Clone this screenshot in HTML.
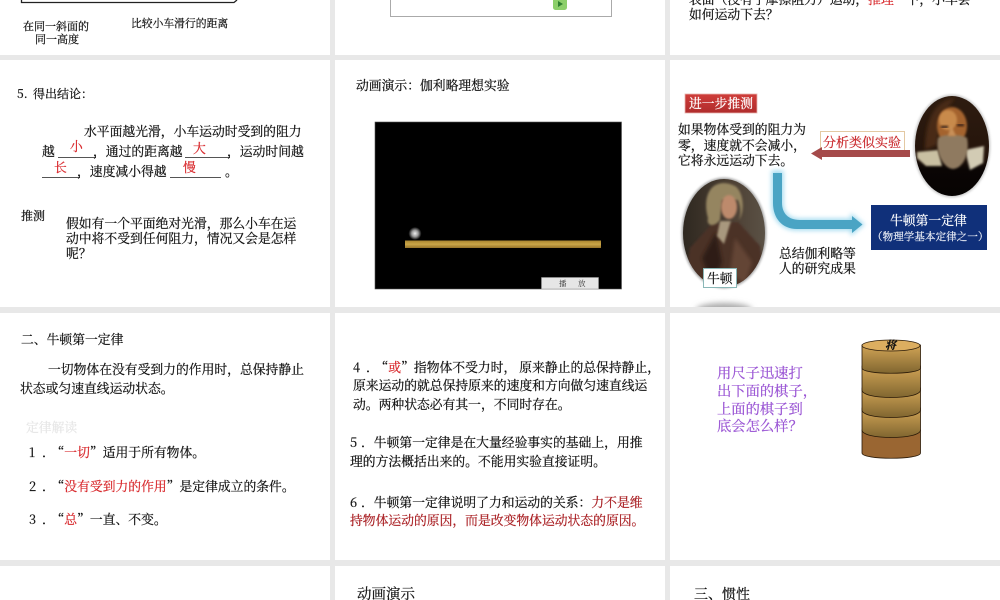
<!DOCTYPE html>
<html lang="zh-CN"><head><meta charset="utf-8">
<style>
html,body{margin:0;padding:0;width:1000px;height:600px;overflow:hidden;background:#e8e8e8}
#r{position:relative;width:1000px;height:600px;overflow:hidden;filter:blur(.35px)}
.p{position:absolute;background:#fff}
.t{position:absolute;white-space:nowrap;line-height:1;font-family:"Noto Serif CJK SC","Liberation Serif",serif;font-size:12.8px;color:#111;-webkit-text-stroke:.22px currentColor}
.r{color:#d8282c}
.n{display:inline-block;width:13px}
.m{display:inline-block;width:9.500px}
.u{position:absolute;height:1px;background:#555}
svg{position:absolute;left:0;top:0}
</style></head><body><div id="r">
<div class="p" style="left:0;top:0;width:330px;height:55px"></div>
<div class="p" style="left:335px;top:0;width:330px;height:55px"></div>
<div class="p" style="left:670px;top:0;width:330px;height:55px"></div>
<div class="p" style="left:0;top:60px;width:330px;height:247px"></div>
<div class="p" style="left:335px;top:60px;width:330px;height:247px"></div>
<div class="p" style="left:670px;top:60px;width:330px;height:247px"></div>
<div class="p" style="left:0;top:313px;width:330px;height:247px"></div>
<div class="p" style="left:335px;top:313px;width:330px;height:247px"></div>
<div class="p" style="left:670px;top:313px;width:330px;height:247px"></div>
<div class="p" style="left:0;top:566px;width:330px;height:34px"></div>
<div class="p" style="left:335px;top:566px;width:330px;height:34px"></div>
<div class="p" style="left:670px;top:566px;width:330px;height:34px"></div>

<svg width="1000" height="600" viewBox="0 0 1000 600">
<defs>
<linearGradient id="lay" x1="0" y1="0" x2="0" y2="1"><stop offset="0" stop-color="#d2a456"/><stop offset="1" stop-color="#806630"/></linearGradient>
<linearGradient id="bar" x1="0" y1="0" x2="0" y2="1"><stop offset="0" stop-color="#a8842f"/><stop offset=".5" stop-color="#c9a548"/><stop offset="1" stop-color="#96742a"/></linearGradient>
<radialGradient id="ball"><stop offset="0" stop-color="#eee"/><stop offset=".5" stop-color="#999"/><stop offset="1" stop-color="#000"/></radialGradient>
<linearGradient id="galbg" x1="0" y1="0" x2="0" y2="1"><stop offset="0" stop-color="#2e1c10"/><stop offset=".6" stop-color="#24140b"/><stop offset=".72" stop-color="#0a0504"/><stop offset="1" stop-color="#060302"/></linearGradient>
<linearGradient id="newtbg" x1="0" y1="0" x2="1" y2="0"><stop offset="0" stop-color="#2e2820"/><stop offset=".6" stop-color="#4d4034"/><stop offset="1" stop-color="#5b5246"/></linearGradient>
<linearGradient id="badge" x1="0" y1="0" x2="0" y2="1"><stop offset="0" stop-color="#cf3d3a"/><stop offset="1" stop-color="#b02c2c"/></linearGradient>
<filter id="gl" x="-30%" y="-30%" width="160%" height="160%"><feGaussianBlur stdDeviation="2.500"/></filter>
<filter id="b1" x="-30%" y="-30%" width="160%" height="160%"><feGaussianBlur stdDeviation="1"/></filter>
<filter id="b2" x="-30%" y="-30%" width="160%" height="160%"><feGaussianBlur stdDeviation="1.800"/></filter>
<filter id="b3" x="-30%" y="-60%" width="160%" height="220%"><feGaussianBlur stdDeviation="3"/></filter>
<clipPath id="cg"><ellipse cx="952" cy="146" rx="37" ry="50"/></clipPath>
<clipPath id="cn"><ellipse cx="724" cy="233" rx="41" ry="54"/></clipPath>
<clipPath id="cs"><rect x="670" y="290" width="100" height="17"/></clipPath>
</defs>

<path d="M21.500 0V2.500H234L237 0" fill="none" stroke="#222" stroke-width="1.300"/>

<path d="M390.500 0V16.500H611.500V0" fill="none" stroke="#aaa" stroke-width="1"/>
<rect x="553" y="-3" width="14" height="13" rx="2.500" fill="#8ccf6a"/>
<path d="M558 1V7L563 4Z" fill="#2f7f2f"/>

<rect x="375" y="122" width="246.500" height="167" fill="#000" stroke="#555" stroke-width=".6"/>
<circle cx="415" cy="233.500" r="6.500" fill="url(#ball)"/>
<rect x="405" y="240.500" width="196" height="7.500" fill="url(#bar)"/>
<rect x="541.500" y="277.500" width="57" height="11.500" fill="#e6e6e6" stroke="#999" stroke-width=".6"/>

<!-- Galileo -->
<ellipse cx="952" cy="146" rx="38.500" ry="51.500" fill="#aaa" opacity=".6" filter="url(#b1)"/>
<g clip-path="url(#cg)">
<rect x="914" y="95" width="76" height="103" fill="url(#galbg)"/>
<path d="M925 150C925 120 935 100 955 98C945 110 938 125 937 145Z" fill="#4a2c16" filter="url(#b2)"/>
<path d="M917 152L938 150L942 166L926 166L917 158Z" fill="#c9c0a2" filter="url(#b1)"/>
<path d="M965 150L984 146L983 163L970 170Z" fill="#d2cbb4" filter="url(#b1)"/>
<ellipse cx="952" cy="126" rx="15" ry="19" fill="#a4642e" filter="url(#b1)"/>
<ellipse cx="948" cy="120" rx="9" ry="10" fill="#c88a4c" filter="url(#b1)"/>
<path d="M938 138C942 134 962 134 967 138C970 152 964 168 953 169C943 168 935 152 938 138Z" fill="#8f7a60" filter="url(#b1)"/>
<path d="M951 125L948 136L956 136Z" fill="#c89058" filter="url(#b1)"/>
<path d="M941 127h7M957 125h7" stroke="#26130a" stroke-width="2" filter="url(#b1)"/>
</g>
<!-- Newton -->
<ellipse cx="724" cy="233" rx="42.500" ry="55.500" fill="#888" opacity=".7" filter="url(#b1)"/>
<g clip-path="url(#cn)">
<rect x="682" y="178" width="84" height="110" fill="url(#newtbg)"/>
<path d="M684 290L690 248L712 224L738 222L760 246L766 290Z" fill="#4b3126" filter="url(#b1)"/>
<path d="M702 258L716 232L722 262L712 285Z" fill="#2f1e17" filter="url(#b2)"/>
<path d="M735 238L752 262L745 285L730 272Z" fill="#644536" filter="url(#b2)"/>
<path d="M718 184C706 188 704 204 708 218C706 226 714 228 720 220L722 200L738 200C741 208 741 214 739 220C745 212 744 192 735 186C729 183 723 182 718 184Z" fill="#958560" filter="url(#b1)"/>
<ellipse cx="729" cy="207" rx="8" ry="12" fill="#bd8a6c" filter="url(#b1)"/>
<path d="M720 221L731 221L724 244L717 236Z" fill="#a8987e" filter="url(#b1)"/>
</g>
<rect x="703.500" y="268.500" width="33" height="19" fill="#fff" stroke="#8ab7b7" stroke-width="1"/>
<g clip-path="url(#cs)"><ellipse cx="724" cy="310" rx="28" ry="7" fill="#aaa" filter="url(#b3)"/></g>

<rect x="820.500" y="131.500" width="84" height="19" fill="#fff" stroke="#e3c9a3" stroke-width="1"/>
<path d="M910 150V157H822V160L811 153.500L822 147V150Z" fill="#a54a4a"/>
<path d="M773 172H782V203C782 213 788 220 800 220H852V216L862.500 224.500L852 233V229H797C782 229 773 218 773 203Z" fill="#a6dcf0" stroke="#a6dcf0" stroke-width="3" filter="url(#gl)"/>
<path d="M773 173H782V203C782 213 788 220 800 220H852V216L862.500 224.500L852 233V229H797C782 229 773 218 773 203Z" fill="#4aa4c4"/>
<rect x="871" y="205" width="116" height="45" fill="#10307a"/>

<rect x="685" y="94" width="72" height="19" fill="url(#badge)" stroke="#e8b5b0" stroke-width=".8"/>

<path d="M862 430V453C862 460 920.500 460 920.500 453V430Z" fill="#9a6632" stroke="#2a1a08" stroke-width=".8"/>
<path d="M862 408V430C862 440 920.500 440 920.500 430V408Z" fill="url(#lay)" stroke="#2a1a08" stroke-width=".8"/>
<path d="M862 388V410C862 420 920.500 420 920.500 410V388Z" fill="url(#lay)" stroke="#2a1a08" stroke-width=".8"/>
<path d="M862 366V390C862 400 920.500 400 920.500 390V366Z" fill="url(#lay)" stroke="#2a1a08" stroke-width=".8"/>
<path d="M862 345V368C862 375 920.500 375 920.500 368V345Z" fill="url(#lay)" stroke="#2a1a08" stroke-width=".8"/>
<ellipse cx="891" cy="345.500" rx="29" ry="5.500" fill="#dcae60" stroke="#2a1a08" stroke-width=".8"/>
</svg>

<div class="u" style="left:58px;top:157px;width:38px"></div>
<div class="u" style="left:185px;top:157px;width:45px"></div>
<div class="u" style="left:42px;top:177px;width:38px"></div>
<div class="u" style="left:170px;top:177px;width:51px"></div>

<!-- col 1 -->
<div class="t" style="left:23px;top:21px;font-size:11px">在同一斜面的</div>
<div class="t" style="left:35px;top:34px;font-size:11px">同一高度</div>
<div class="t" style="left:131px;top:19px;font-size:10.800px">比较小车滑行的距离</div>
<div class="t" style="left:17px;top:88px;font-size:12px"><span style="display:inline-block;width:16px">5.</span>得出结论：</div>
<div class="t" style="left:84px;top:125px">水平面越光滑，小车运动时受到的阻力</div>
<div class="t" style="left:42px;top:145px">越</div>
<div class="t" style="left:93px;top:145px">，通过的距离越</div>
<div class="t" style="left:227px;top:145px">，运动时间越</div>
<div class="t" style="left:77px;top:165px">，速度减小得越</div>
<div class="t" style="left:225px;top:165px">。</div>
<div class="t r" style="left:70px;top:140px">小</div>
<div class="t r" style="left:193px;top:142px">大</div>
<div class="t r" style="left:54px;top:161px">长</div>
<div class="t r" style="left:183px;top:161px">慢</div>
<div class="t" style="left:21px;top:210px;font-size:12px">推测</div>
<div class="t" style="left:66px;top:217px">假如有一个平面绝对光滑，那么小车在运</div>
<div class="t" style="left:66px;top:232px">动中将不受到任何阻力，情况又会是怎样</div>
<div class="t" style="left:66px;top:247px">呢？</div>

<div class="t" style="left:21px;top:333px">二、牛顿第一定律</div>
<div class="t" style="left:48px;top:363px">一切物体在没有受到力的作用时，总保持静止</div>
<div class="t" style="left:20px;top:382px">状态或匀速直线运动状态。</div>
<div class="t" style="left:26px;top:421px;color:#e6e6e6">定律解读</div>
<div class="t" style="left:29px;top:446px"><span class="n">1</span><span class="m">．</span>“<span class="r">一切</span>”适用于所有物体。</div>
<div class="t" style="left:29px;top:480px"><span class="n">2</span><span class="m">．</span>“<span class="r">没有受到力的作用</span>”是定律成立的条件。</div>
<div class="t" style="left:29px;top:513px"><span class="n">3</span><span class="m">．</span>“<span class="r">总</span>”一直、不变。</div>

<!-- col 2 -->
<div class="t" style="left:356px;top:79px">动画演示：伽利略理想实验</div>
<div class="t" style="left:559px;top:279.500px;font-size:7.500px;color:#333;-webkit-text-stroke:0">播</div>
<div class="t" style="left:578px;top:279.500px;font-size:7.500px;color:#333;-webkit-text-stroke:0">放</div>
<div class="t" style="left:353px;top:361px"><span class="n">4</span><span class="m">．</span>“<span class="r">或</span>”指物体不受力时，<span style="margin-left:3px">原来静止的总保持静止，</span></div>
<div class="t" style="left:353px;top:379px">原来运动的就总保持原来的速度和方向做匀速直线运</div>
<div class="t" style="left:353px;top:398px">动。两种状态必有其一，不同时存在。</div>
<div class="t" style="left:350px;top:436px"><span style="display:inline-block;width:11px">5</span>．牛顿第一定律是在大量经验事实的基础上，用推</div>
<div class="t" style="left:350px;top:455px">理的方法概括出来的。不能用实验直接证明。</div>
<div class="t" style="left:350px;top:496px"><span style="display:inline-block;width:11px">6</span>．牛顿第一定律说明了力和运动的关系：<span style="color:#a81c20">力不是维</span></div>
<div class="t" style="left:350px;top:514px;color:#a81c20">持物体运动的原因，而是改变物体运动状态的原因。</div>
<div class="t" style="left:357px;top:587px;font-size:14.500px">动画演示</div>

<!-- col 3 -->
<div class="t" style="left:689px;top:-7px">表面（没有了摩擦阻力）运动，<span class="r">推理</span>一下，小车会</div>
<div class="t" style="left:689px;top:8px">如何运动下去？</div>
<div class="t" style="left:689px;top:97px;color:#fff;font-size:12.800px">进一步推测</div>
<div class="t" style="left:678px;top:123px">如果物体受到的阻力为</div>
<div class="t" style="left:678px;top:139px">零，速度就不会减小，</div>
<div class="t" style="left:678px;top:154px">它将永远运动下去。</div>
<div class="t r" style="left:823px;top:135px;font-size:13px;color:#c9282c">分析类似实验</div>
<div class="t" style="left:707px;top:272px;font-size:12.800px">牛顿</div>
<div class="t" style="left:890px;top:214px;color:#fff;font-size:12.800px">牛顿第一定律</div>
<div class="t" style="left:872px;top:232px;color:#e8ecf5;font-size:10.500px;letter-spacing:.1px">（物理学基本定律之一）</div>
<div class="t" style="left:779px;top:247px">总结伽利略等</div>
<div class="t" style="left:779px;top:262px">人的研究成果</div>
<div class="t" style="left:717px;top:366px;font-size:14.300px;color:#9a55d4">用尺子迅速打</div>
<div class="t" style="left:717px;top:384px;font-size:14.300px;color:#9a55d4">出下面的棋子，</div>
<div class="t" style="left:717px;top:402px;font-size:14.300px;color:#9a55d4">上面的棋子到</div>
<div class="t" style="left:717px;top:419px;font-size:14.300px;color:#9a55d4">底会怎么样？</div>
<div class="t" style="left:885px;top:340px;font-size:11px;font-style:italic;font-weight:700">将</div>
<div class="t" style="left:694px;top:587px;font-size:14px">三、惯性</div>
</div></body></html>
